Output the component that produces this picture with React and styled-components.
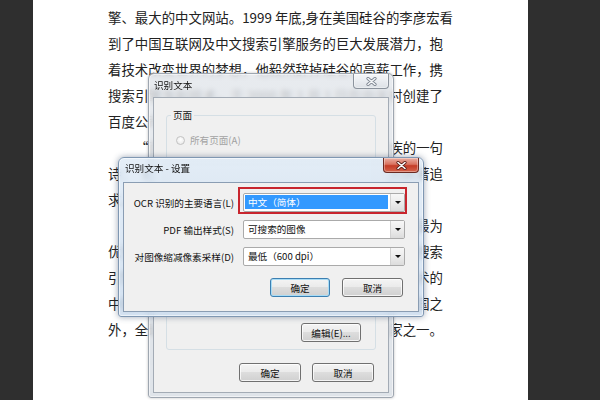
import React from 'react';
import styled, { createGlobalStyle, css } from 'styled-components';

const Global = createGlobalStyle`
  html, body { margin: 0; padding: 0; background: #2f2f2f; }
  body { width: 600px; height: 400px; overflow: hidden; font-family: "Noto Sans CJK SC", sans-serif; }
`;

const CJK = '"Noto Sans CJK SC", "Noto Sans", sans-serif';

const Stage = styled.div`
  position: relative;
  width: 600px;
  height: 400px;
  display: flex;
  overflow: hidden;
  background: #2f2f2f;
`;

const Gutter = styled.div`
  flex: none;
  width: ${(p) => p.$w}px;
  background: #2f2f2f;
`;

const Page = styled.div`
  flex: none;
  width: 495px;
  box-sizing: border-box;
  padding: 4px 0 0 75px;
  background: #ffffff;
`;

const Line = styled.div`
  height: 26px;
  line-height: 26px;
  font-family: ${CJK};
  font-size: 13.4px;
  color: #222;
  white-space: nowrap;
  box-sizing: border-box;
  width: ${(p) => (p.$w ? `${p.$w}px` : 'auto')};
  padding-left: ${(p) => (p.$indent ? 27 : 0)}px;
  text-align: ${(p) => (p.$w ? 'justify' : 'left')};
  text-align-last: ${(p) => (p.$w ? 'justify' : 'auto')};
`;

/* ---------- windows ---------- */

const Win = styled.div`
  position: absolute;
  left: ${(p) => p.$x}px;
  top: ${(p) => p.$y}px;
  width: ${(p) => p.$w}px;
  height: ${(p) => p.$h}px;
  box-sizing: border-box;
  display: flex;
  flex-direction: column;
  padding: 0 4px 4px 4px;
  border: 1px solid ${(p) => (p.$active ? '#7f97b2' : '#9ea6b0')};
  border-radius: 6px 6px 3px 3px;
  background: ${(p) =>
    p.$active
      ? 'linear-gradient(180deg, rgba(222,234,246,0.82), rgba(200,218,238,0.78))'
      : 'linear-gradient(180deg, rgba(226,230,235,0.8), rgba(214,220,227,0.78))'};
  backdrop-filter: blur(2.5px);
  box-shadow: inset 0 0 0 1px rgba(255, 255, 255, 0.55),
    ${(p) => (p.$active ? '0 0 6px rgba(40, 60, 90, 0.45)' : '0 0 3px rgba(0, 0, 0, 0.25)')};
`;

const TitleRow = styled.div`
  flex: none;
  height: ${(p) => p.$h}px;
  display: flex;
  align-items: flex-start;
  justify-content: space-between;
`;

const TitleText = styled.span`
  font-family: ${CJK};
  font-size: 9.6px;
  line-height: 12px;
  color: #111;
  padding-top: ${(p) => p.$pt}px;
  padding-left: ${(p) => p.$pl}px;
`;

const CloseBtn = styled.div`
  width: 36px;
  height: 15px;
  box-sizing: border-box;
  display: flex;
  align-items: center;
  justify-content: center;
  border: 1px solid ${(p) => (p.$active ? '#6b2a22' : '#8b939d')};
  border-top: none;
  border-radius: 0 0 4px 4px;
  background: ${(p) =>
    p.$active
      ? 'linear-gradient(180deg, #eab0a4 0%, #d9725f 45%, #c43c27 55%, #d5644c 100%)'
      : 'linear-gradient(180deg, rgba(255,255,255,0.7) 0%, rgba(235,238,242,0.6) 50%, rgba(215,220,226,0.6) 100%)'};
  box-shadow: inset 0 0 0 1px rgba(255, 255, 255, 0.35);
`;

const Panel = styled.div`
  flex: 1;
  display: flex;
  flex-direction: column;
  background: #f0f0f0;
  border: 1px solid ${(p) => (p.$active ? '#8a9db3' : '#a3abb5')};
`;

/* ---------- back dialog parts ---------- */

const Group = styled.fieldset`
  margin: 11px 12px 0 12px;
  padding: 0;
  min-width: 0;
  border: 1px solid #d5dfe5;
  border-radius: 3px;
`;

const Legend = styled.legend`
  margin-left: 4px;
  padding: 0 2px;
  font-family: ${CJK};
  font-size: 9.6px;
  line-height: 12px;
  color: #111;
`;

const RadioRow = styled.div`
  margin-top: 13px;
  padding-left: 9px;
  height: 12px;
  display: flex;
  align-items: center;
  gap: 5px;
  font-family: ${CJK};
  font-size: 9.6px;
  line-height: 12px;
  color: #a2a2a2;
`;

const RadioDot = styled.span`
  width: 9px;
  height: 9px;
  box-sizing: border-box;
  border-radius: 50%;
  border: 1px solid #c2c2c2;
  background: radial-gradient(circle at 50% 40%, #ffffff, #e4e4e4);
`;

const RightRow = styled.div`
  display: flex;
  justify-content: flex-end;
  gap: ${(p) => p.$gap || 0}px;
  margin-top: ${(p) => p.$mt}px;
  padding-right: ${(p) => p.$pr}px;
  padding-bottom: ${(p) => p.$pb || 0}px;
`;

/* ---------- front dialog parts ---------- */

const Form = styled.div`
  display: grid;
  grid-template-columns: 110px 162px;
  column-gap: 9px;
  row-gap: 8px;
  align-items: center;
  padding-top: 10px;
`;

const Label = styled.span`
  justify-self: end;
  font-family: ${CJK};
  font-size: 9.6px;
  line-height: 12px;
  color: #111;
  white-space: nowrap;
`;

const Combo = styled.div`
  position: relative;
  height: 19px;
  box-sizing: border-box;
  display: flex;
  align-items: stretch;
  border: 1px solid #aaaaaa;
  border-radius: 2px;
  background: #ffffff;
  ${(p) =>
    p.$flagged &&
    css`
      &::after {
        content: '';
        position: absolute;
        left: -6px;
        right: -3px;
        top: -7px;
        bottom: -3px;
        border: 2px solid #c8252d;
      }
    `}
`;

const ComboValue = styled.div`
  flex: 1;
  margin: ${(p) => (p.$sel ? '1px 2px 2px 1px' : '0')};
  padding-left: ${(p) => (p.$sel ? 3 : 4)}px;
  font-family: ${CJK};
  font-size: 9.6px;
  line-height: ${(p) => (p.$sel ? 14 : 17)}px;
  white-space: nowrap;
  background: ${(p) => (p.$sel ? '#3399ff' : 'transparent')};
  color: ${(p) => (p.$sel ? '#ffffff' : '#111')};
`;

const ComboArrow = styled.div`
  width: 13px;
  display: flex;
  align-items: center;
  justify-content: center;
  border-left: 1px solid #d2d2d2;
  background: linear-gradient(180deg, #f7f7f7 0%, #ececec 50%, #dcdcdc 100%);
  &::before {
    content: '';
    border-left: 3px solid transparent;
    border-right: 3px solid transparent;
    border-top: 3px solid #111;
  }
`;

const Btn = styled.button`
  width: ${(p) => p.$w}px;
  height: 19px;
  box-sizing: border-box;
  padding: 0;
  font-family: ${CJK};
  font-size: 9.6px;
  line-height: 12px;
  color: #111;
  border: 1px solid ${(p) => (p.$default ? '#3c7fb1' : '#707070')};
  border-radius: 3px;
  background: linear-gradient(180deg, #f4f4f4 0%, #ebebeb 45%, #dddddd 50%, #d0d0d0 100%);
  box-shadow: inset 0 0 0 1px ${(p) => (p.$default ? '#a8dcf6' : 'rgba(255,255,255,0.75)')};
`;

/* ---------- icons ---------- */

const CloseGlyph = ({ active }) => (
  <svg width="11" height="9" viewBox="0 0 11 9">
    <path
      d="M2 1.5 L9 7.5 M9 1.5 L2 7.5"
      stroke={active ? '#5a2019' : '#7d8590'}
      strokeWidth="3.2"
      strokeLinecap="round"
      fill="none"
    />
    <path
      d="M2 1.5 L9 7.5 M9 1.5 L2 7.5"
      stroke={active ? '#ffffff' : '#f4f6f8'}
      strokeWidth="1.6"
      strokeLinecap="round"
      fill="none"
    />
  </svg>
);

const lines = [
  { t: '擎、最大的中文网站。1999 年底,身在美国硅谷的李彦宏看', w: 345 },
  { t: '到了中国互联网及中文搜索引擎服务的巨大发展潜力，抱', w: 335 },
  { t: '着技术改变世界的梦想，他毅然辞掉硅谷的高薪工作，携', w: 335 },
  { t: '搜索引擎专利技术，于 2000 年 1 月 1 日在中关村创建了', w: 335 },
  { t: '百度公司。' },
  { t: '“百度”二字，源于中国宋朝著名词人辛弃疾的一句', w: 335, indent: true },
  { t: '诗：“众里寻他千百度”，象征着百度对中文检索的执著追', w: 335 },
  { t: '求。' },
  { t: '百度拥有数万名研发工程师，这是中国乃至全球最为', w: 335, indent: true },
  { t: '优秀的技术团队。这支队伍掌握着世界上最为先进的搜索', w: 335 },
  { t: '引擎技术，使百度成为中国掌握世界尖端科学核心技术的', w: 335 },
  { t: '中国高科技企业，也使中国成为美国、俄罗斯、和韩国之', w: 335 },
  { t: '外，全球仅有的 4 个拥有搜索引擎核心技术的国家之一。' },
];

export default function App() {
  return (
    <>
      <Global />
      <Stage>
        <Gutter $w={33} />
        <Page>
          {lines.map((l, i) => (
            <Line key={i} $w={l.w} $indent={l.indent}>
              {l.t}
            </Line>
          ))}
        </Page>
        <Gutter $w={72} />

        {/* back dialog: 识别文本 */}
        <Win $x={148} $y={73} $w={246} $h={325}>
          <TitleRow $h={23}>
            <TitleText $pt={5} $pl={1}>识别文本</TitleText>
            <CloseBtn>
              <CloseGlyph />
            </CloseBtn>
          </TitleRow>
          <Panel>
            <Group>
              <Legend>页面</Legend>
              <RadioRow>
                <RadioDot />
                <span>所有页面(A)</span>
              </RadioRow>
              <RightRow $mt={177} $pr={14} $pb={7}>
                <Btn $w={60}>编辑(E)...</Btn>
              </RightRow>
            </Group>
            <RightRow $mt={13} $pr={14} $gap={11}>
              <Btn $w={62}>确定</Btn>
              <Btn $w={62}>取消</Btn>
            </RightRow>
          </Panel>
        </Win>

        {/* front dialog: 识别文本 - 设置 */}
        <Win $active $x={118} $y={157} $w={306} $h={160}>
          <TitleRow $h={24}>
            <TitleText $pt={4} $pl={2}>识别文本 - 设置</TitleText>
            <CloseBtn $active>
              <CloseGlyph active />
            </CloseBtn>
          </TitleRow>
          <Panel $active>
            <Form>
              <Label>OCR 识别的主要语言(L)</Label>
              <Combo $flagged>
                <ComboValue $sel>中文（简体）</ComboValue>
                <ComboArrow />
              </Combo>
              <Label>PDF 输出样式(S)</Label>
              <Combo>
                <ComboValue>可搜索的图像</ComboValue>
                <ComboArrow />
              </Combo>
              <Label>对图像缩减像素采样(D)</Label>
              <Combo>
                <ComboValue>最低（600 dpi）</ComboValue>
                <ComboArrow />
              </Combo>
            </Form>
            <RightRow $mt={12} $pr={15} $gap={12}>
              <Btn $w={60} $default>确定</Btn>
              <Btn $w={61}>取消</Btn>
            </RightRow>
          </Panel>
        </Win>
      </Stage>
    </>
  );
}
